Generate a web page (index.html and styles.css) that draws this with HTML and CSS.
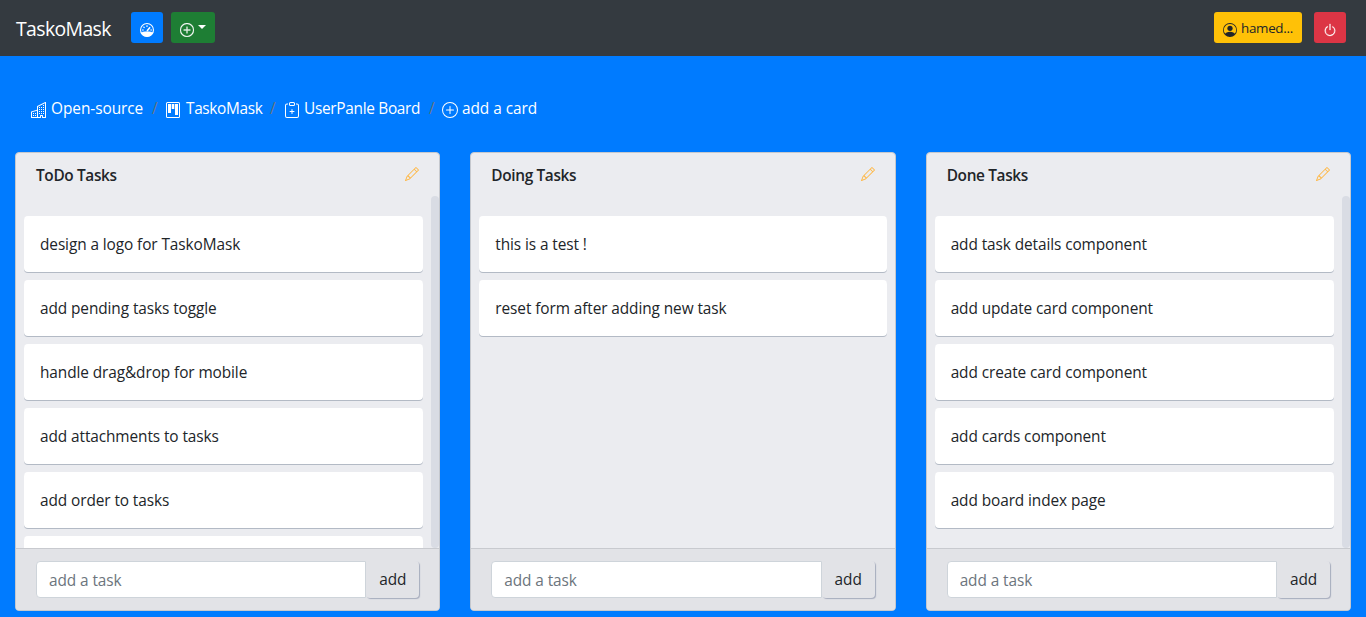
FILE: index.html
```html
<!DOCTYPE html>
<html lang="en">
<head>
<meta charset="utf-8">
<title>TaskoMask</title>
<link rel="stylesheet" href="styles.css">
</head>
<body>
<svg class="sprite" aria-hidden="true">
  <symbol id="plus" viewBox="0 0 16 16"><path d="M8 15A7 7 0 1 1 8 1a7 7 0 0 1 0 14zm0 1A8 8 0 1 0 8 0a8 8 0 0 0 0 16z"/><path d="M8 4a.5.5 0 0 1 .5.5v3h3a.5.5 0 0 1 0 1h-3v3a.5.5 0 0 1-1 0v-3h-3a.5.5 0 0 1 0-1h3v-3A.5.5 0 0 1 8 4z"/></symbol>
  <symbol id="pencil" viewBox="0 0 16 16"><path d="M12.146.146a.5.5 0 0 1 .708 0l3 3a.5.5 0 0 1 0 .708l-10 10a.5.5 0 0 1-.168.11l-5 2a.5.5 0 0 1-.65-.65l2-5a.5.5 0 0 1 .11-.168l10-10zM11.207 2.500 13.500 4.793 14.793 3.500 12.500 1.207zM12.793 5.500 10.500 3.207 4 9.707V10h.5a.5.5 0 0 1 .5.5v.5h.5a.5.5 0 0 1 .5.5v.5h.293zM3.032 10.675l-.106.106-1.528 3.821 3.821-1.528.106-.106A.5.5 0 0 1 5 12.500V12h-.5a.5.5 0 0 1-.5-.5V11h-.5a.5.5 0 0 1-.468-.325z" fill-rule="evenodd"/></symbol>
</svg>
<nav class="navbar">
  <a class="brand">TaskoMask</a>
  <a class="btn btn-primary"><svg class="icon-sm" viewBox="0 0 16 16"><circle class="dial" cx="8" cy="8" r="7.400"/><path d="M1 10.800Q4.500 9.800 8 9.800t7 1A7.600 7.600 0 0 1 1 10.800z"/><path class="needle" d="M8 9.200 11.500 4.800"/><path class="ticks" d="M8 2.500v2M4 4.300l1.200 1.200M2.300 8h2M11.800 8h2"/></svg></a>
  <a class="btn btn-success"><svg class="icon-sm"><use href="#plus"/></svg><span class="caret"></span></a>
  <a class="btn btn-warning"><svg class="icon-sm" viewBox="0 0 16 16"><path d="M11 6a3 3 0 1 1-6 0 3 3 0 0 1 6 0z"/><path fill-rule="evenodd" d="M0 8a8 8 0 1 1 16 0A8 8 0 0 1 0 8zm8-7a7 7 0 0 0-5.468 11.370C3.242 11.226 4.805 10 8 10s4.757 1.225 5.468 2.370A7 7 0 0 0 8 1z"/></svg><span>hamed...</span></a>
  <a class="btn btn-danger"><svg class="icon-sm" viewBox="0 0 16 16"><path d="M7.500 1v7h1V1h-1z"/><path d="M3 8.812a4.999 4.999 0 0 1 2.578-4.375l-.485-.874A6 6 0 1 0 11 3.616l-.501.865A5 5 0 1 1 3 8.812z"/></svg></a>
</nav>
<div class="breadcrumb">
  <a class="crumb crumb-org"><svg class="icon" viewBox="0 0 16 16"><path fill-rule="evenodd" d="M14.763.075A.5.5 0 0 1 15 .5v15a.5.5 0 0 1-.5.5h-3a.5.5 0 0 1-.5-.5V14h-1v1.500a.5.5 0 0 1-.5.5h-9a.5.5 0 0 1-.5-.5V10a.5.5 0 0 1 .342-.474L6 7.640V4.500a.5.5 0 0 1 .276-.447l8-4a.5.5 0 0 1 .487.022zM6 8.694 1 10.360V15h5V8.694zM7 15h2v-1.500a.5.5 0 0 1 .5-.5h2a.5.5 0 0 1 .5.5V15h2V1.309l-7 3.500V15z"/><path d="M2 11h1v1H2v-1zm2 0h1v1H4v-1zm-2 2h1v1H2v-1zm2 0h1v1H4v-1zm4-4h1v1H8V9zm2 0h1v1h-1V9zm-2 2h1v1H8v-1zm2 0h1v1h-1v-1zm2-2h1v1h-1V9zm0 2h1v1h-1v-1zM8 7h1v1H8V7zm2 0h1v1h-1V7zm2 0h1v1h-1V7zM8 5h1v1H8V5zm2 0h1v1h-1V5zm2 0h1v1h-1V5zm0-2h1v1h-1V3z"/></svg><span>Open-source</span></a>
  <span class="slash">/</span>
  <a class="crumb crumb-project"><svg class="icon" viewBox="0 0 16 16"><path d="M13.500 1a.5.5 0 0 1 .5.5v13a.5.5 0 0 1-.5.5h-11a.5.5 0 0 1-.5-.5v-13a.5.5 0 0 1 .5-.5h11zm-11-1A1.500 1.500 0 0 0 1 1.500v13A1.500 1.500 0 0 0 2.500 16h11a1.500 1.500 0 0 0 1.500-1.500v-13A1.500 1.500 0 0 0 13.500 0h-11z"/><path d="M3 2h3v9H3zm3.700 0h2.600v5H6.700zM10 2h3v11h-3z"/></svg><span>TaskoMask</span></a>
  <span class="slash">/</span>
  <a class="crumb crumb-board"><svg class="icon" viewBox="0 0 16 16"><path fill-rule="evenodd" d="M8 7a.5.5 0 0 1 .5.5V9H10a.5.5 0 0 1 0 1H8.500v1.500a.5.5 0 0 1-1 0V10H6a.5.5 0 0 1 0-1h1.500V7.500A.5.5 0 0 1 8 7z"/><path d="M4 1.500H3a2 2 0 0 0-2 2V14a2 2 0 0 0 2 2h10a2 2 0 0 0 2-2V3.500a2 2 0 0 0-2-2h-1v1h1a1 1 0 0 1 1 1V14a1 1 0 0 1-1 1H3a1 1 0 0 1-1-1V3.500a1 1 0 0 1 1-1h1v-1z"/><path d="M9.500 1a.5.5 0 0 1 .5.5v1a.5.5 0 0 1-.5.5h-3a.5.5 0 0 1-.5-.5v-1a.5.5 0 0 1 .5-.5h3zm-3-1A1.500 1.500 0 0 0 5 1.500v1A1.500 1.500 0 0 0 6.500 4h3A1.500 1.500 0 0 0 11 2.500v-1A1.500 1.500 0 0 0 9.500 0h-3z"/></svg><span>UserPanle Board</span></a>
  <span class="slash">/</span>
  <a class="crumb crumb-add"><svg class="icon"><use href="#plus"/></svg><span>add a card</span></a>
</div>
<main class="board">
  <section class="card">
    <header class="card-head"><h2>ToDo Tasks</h2><svg class="edit"><use href="#pencil"/></svg></header>
    <div class="list scroll">
      <div class="task">design a logo for TaskoMask</div>
      <div class="task">add pending tasks toggle</div>
      <div class="task">handle drag&amp;drop for mobile</div>
      <div class="task">add attachments to tasks</div>
      <div class="task">add order to tasks</div>
      <div class="task"></div>
    </div>
    <footer class="card-foot"><input placeholder="add a task"><button>add</button></footer>
  </section>
  <section class="card">
    <header class="card-head"><h2>Doing Tasks</h2><svg class="edit"><use href="#pencil"/></svg></header>
    <div class="list">
      <div class="task">this is a test !</div>
      <div class="task">reset form after adding new task</div>
    </div>
    <footer class="card-foot"><input placeholder="add a task"><button>add</button></footer>
  </section>
  <section class="card">
    <header class="card-head"><h2>Done Tasks</h2><svg class="edit"><use href="#pencil"/></svg></header>
    <div class="list scroll">
      <div class="task">add task details component</div>
      <div class="task">add update card component</div>
      <div class="task">add create card component</div>
      <div class="task">add cards component</div>
      <div class="task">add board index page</div>
    </div>
    <footer class="card-foot"><input placeholder="add a task"><button>add</button></footer>
  </section>
</main>
</body>
</html>
```
FILE: styles.css
```css
* { box-sizing: border-box; }
body {
  margin: 0;
  height: 617px;
  overflow: hidden;
  background: #007bff;
  color: #212529;
  font: 15.4px/24px "Open Sans", "Noto Sans", sans-serif;
  letter-spacing: -0.09px;
}
svg { fill: currentColor; flex: none; }
.sprite { display: none; }
.navbar {
  display: flex;
  align-items: center;
  height: 56px;
  padding: 0 20px 1px 16px;
  background: #343a40;
  color: #fff;
}
.brand { width: 115px; font-size: 19.4px; line-height: 30px; padding-top: 3px; letter-spacing: -0.6px; }
.btn {
  display: flex;
  align-items: center;
  height: 31px;
  padding: 4px 9px 0;
  border-radius: 3px;
  color: #fff;
  font-size: 13.4px;
}
.icon-sm { width: 14px; height: 14px; stroke: currentColor; stroke-width: 0.3; }
.dial, .needle, .ticks { fill: none; stroke: currentColor; }
.dial { stroke-width: 1.2; }
.needle { stroke-width: 1.7; }
.ticks { stroke-width: 1.3; }
.btn-primary { background: #007bff; width: 32px; margin-right: 8px; }
.btn-success { background: #1e7e34; width: 44px; gap: 4px; }
.caret {
  border: 4px solid transparent;
  border-top-color: #fff;
  border-bottom: 0;
  margin-bottom: 6px;
}
.btn-warning { background: #ffc107; color: #212529; width: 88px; margin-left: auto; gap: 4px; letter-spacing: -0.3px; }
.btn-warning .icon-sm { stroke: none; }
.btn-warning span { margin-top: -3px; }
.btn-danger { background: #dc3545; width: 32px; margin-left: 12px; }
.breadcrumb {
  display: flex;
  height: 96px;
  padding: 41px 31px 0;
  color: #fff;
}
.crumb { display: flex; gap: 4px; white-space: nowrap; }
.crumb-org { width: 121px; letter-spacing: -0.05px; }
.crumb-project { width: 105px; gap: 5px; letter-spacing: -0.35px; }
.crumb-board { width: 145px; letter-spacing: -0.3px; }
.slash { width: 14px; color: #6c757d; }
.slash:nth-of-type(3) { width: 12px; }
.icon { width: 16px; height: 16px; margin-top: 5px; }
.crumb-org + .slash { width: 13px; }
.crumb-add { letter-spacing: -0.05px; margin-left: 1px; }
.board {
  display: grid;
  grid-template-columns: repeat(3, 1fr);
  gap: 30px;
  padding: 0 15px;
}
.card {
  display: flex;
  flex-direction: column;
  height: 459px;
  border: 1px solid #c5c8ce;
  border-radius: 4px;
  background: #ebecf0;
  overflow: hidden;
}
.card-head {
  display: flex;
  justify-content: space-between;
  height: 43px;
  padding: 11px 20px 0;
}
h2 { margin: 0; font-size: 15.4px; line-height: 24px; font-weight: 600; letter-spacing: -0.35px; }
.edit { width: 14px; height: 14px; margin-top: 3px; color: #ffb53d; }
.list {
  position: relative;
  display: flex;
  flex-direction: column;
  gap: 8px;
  height: 352px;
  padding: 20px 8px 0;
  overflow: hidden;
}
.scroll { padding-right: 16px; }
.scroll::after {
  content: "";
  position: absolute;
  top: 0;
  right: 0;
  width: 8px;
  height: 352px;
  border-radius: 4px;
  background: #d9dce4;
}
.task {
  flex: none;
  height: 56px;
  padding: 17px 16px 15px;
  border-radius: 4px;
  background: #fff;
  box-shadow: 0 1px 0 #b3bac5;
  white-space: nowrap;
}
.card-foot {
  display: flex;
  height: 62px;
  padding: 12px 20px;
  border-top: 1px solid #c8cacf;
  background: #e2e3e7;
}
input, button { font: inherit; letter-spacing: inherit; }
input {
  flex: 1;
  min-width: 0;
  height: 37px;
  padding: 1px 12px 0;
  border: 1px solid #ced4da;
  border-radius: 4px 0 0 4px;
  background: #fff;
}
input::placeholder { color: #6c757d; opacity: 1; }
button {
  width: 53px;
  height: 37px;
  padding: 0;
  border: 0;
  border-radius: 4px;
  background: #e2e3e7;
  color: #212529;
  box-shadow: 1px 1px 1px #a6acbd;
}
```
